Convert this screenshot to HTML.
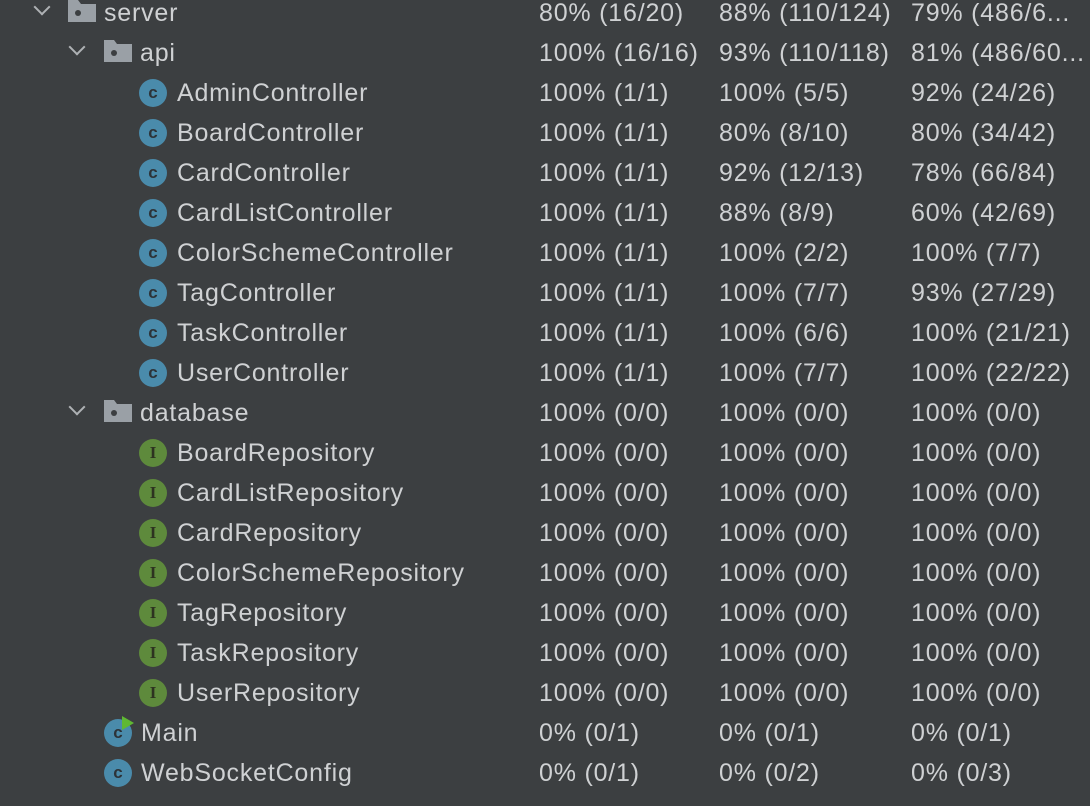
<!DOCTYPE html><html><head><style>
body{margin:0;width:1090px;height:806px;background:#3c3f41;overflow:hidden;font-family:"Liberation Sans",sans-serif;font-size:25px;letter-spacing:0.8px;color:#cfd1d3}
.r{position:absolute;left:0;height:40px;width:1090px;line-height:40px;white-space:nowrap}
.r span{position:absolute}
.c1{left:539px}.c2{left:719px}.c3{left:911px}
.ic{position:absolute;width:28px;height:28px;border-radius:50%;top:6px;text-align:center;line-height:28px;font-size:17px;font-weight:bold;letter-spacing:0}
.C{background:#4a8bab;color:#2d3338}
.I{background:#5e8a3c;color:#2d3320;font-family:"Liberation Serif",serif}
.f{position:absolute;top:8px;width:28px;height:22px}
.ch{position:absolute;top:12px;width:10px;height:10px;border-right:2px solid #aeb1b4;border-bottom:2px solid #aeb1b4;transform:rotate(45deg)}
</style></head><body>
<div class="r" style="top:-7px"><div class="ch" style="left:36px;top:8px"></div><svg class="f" style="left:68px;top:7px" viewBox="0 0 28 22"><path d="M0 0h10l3 4h15v18H0z" fill="#9aa0a6"/><circle cx="10" cy="13" r="3" fill="#3c3f41"/></svg><span style="left:104px">server</span><span class="c1">80% (16/20)</span><span class="c2">88% (110/124)</span><span class="c3">79% (486/6...</span></div>
<div class="r" style="top:33px"><div class="ch" style="left:71px;top:8px"></div><svg class="f" style="left:104px;top:7px" viewBox="0 0 28 22"><path d="M0 0h10l3 4h15v18H0z" fill="#9aa0a6"/><circle cx="10" cy="13" r="3" fill="#3c3f41"/></svg><span style="left:140px">api</span><span class="c1">100% (16/16)</span><span class="c2">93% (110/118)</span><span class="c3">81% (486/60...</span></div>
<div class="r" style="top:73px"><div class="ic C" style="left:139px">c</div><span style="left:177px">AdminController</span><span class="c1">100% (1/1)</span><span class="c2">100% (5/5)</span><span class="c3">92% (24/26)</span></div>
<div class="r" style="top:113px"><div class="ic C" style="left:139px">c</div><span style="left:177px">BoardController</span><span class="c1">100% (1/1)</span><span class="c2">80% (8/10)</span><span class="c3">80% (34/42)</span></div>
<div class="r" style="top:153px"><div class="ic C" style="left:139px">c</div><span style="left:177px">CardController</span><span class="c1">100% (1/1)</span><span class="c2">92% (12/13)</span><span class="c3">78% (66/84)</span></div>
<div class="r" style="top:193px"><div class="ic C" style="left:139px">c</div><span style="left:177px">CardListController</span><span class="c1">100% (1/1)</span><span class="c2">88% (8/9)</span><span class="c3">60% (42/69)</span></div>
<div class="r" style="top:233px"><div class="ic C" style="left:139px">c</div><span style="left:177px">ColorSchemeController</span><span class="c1">100% (1/1)</span><span class="c2">100% (2/2)</span><span class="c3">100% (7/7)</span></div>
<div class="r" style="top:273px"><div class="ic C" style="left:139px">c</div><span style="left:177px">TagController</span><span class="c1">100% (1/1)</span><span class="c2">100% (7/7)</span><span class="c3">93% (27/29)</span></div>
<div class="r" style="top:313px"><div class="ic C" style="left:139px">c</div><span style="left:177px">TaskController</span><span class="c1">100% (1/1)</span><span class="c2">100% (6/6)</span><span class="c3">100% (21/21)</span></div>
<div class="r" style="top:353px"><div class="ic C" style="left:139px">c</div><span style="left:177px">UserController</span><span class="c1">100% (1/1)</span><span class="c2">100% (7/7)</span><span class="c3">100% (22/22)</span></div>
<div class="r" style="top:393px"><div class="ch" style="left:71px;top:8px"></div><svg class="f" style="left:104px;top:7px" viewBox="0 0 28 22"><path d="M0 0h10l3 4h15v18H0z" fill="#9aa0a6"/><circle cx="10" cy="13" r="3" fill="#3c3f41"/></svg><span style="left:140px">database</span><span class="c1">100% (0/0)</span><span class="c2">100% (0/0)</span><span class="c3">100% (0/0)</span></div>
<div class="r" style="top:433px"><div class="ic I" style="left:139px">I</div><span style="left:177px">BoardRepository</span><span class="c1">100% (0/0)</span><span class="c2">100% (0/0)</span><span class="c3">100% (0/0)</span></div>
<div class="r" style="top:473px"><div class="ic I" style="left:139px">I</div><span style="left:177px">CardListRepository</span><span class="c1">100% (0/0)</span><span class="c2">100% (0/0)</span><span class="c3">100% (0/0)</span></div>
<div class="r" style="top:513px"><div class="ic I" style="left:139px">I</div><span style="left:177px">CardRepository</span><span class="c1">100% (0/0)</span><span class="c2">100% (0/0)</span><span class="c3">100% (0/0)</span></div>
<div class="r" style="top:553px"><div class="ic I" style="left:139px">I</div><span style="left:177px">ColorSchemeRepository</span><span class="c1">100% (0/0)</span><span class="c2">100% (0/0)</span><span class="c3">100% (0/0)</span></div>
<div class="r" style="top:593px"><div class="ic I" style="left:139px">I</div><span style="left:177px">TagRepository</span><span class="c1">100% (0/0)</span><span class="c2">100% (0/0)</span><span class="c3">100% (0/0)</span></div>
<div class="r" style="top:633px"><div class="ic I" style="left:139px">I</div><span style="left:177px">TaskRepository</span><span class="c1">100% (0/0)</span><span class="c2">100% (0/0)</span><span class="c3">100% (0/0)</span></div>
<div class="r" style="top:673px"><div class="ic I" style="left:139px">I</div><span style="left:177px">UserRepository</span><span class="c1">100% (0/0)</span><span class="c2">100% (0/0)</span><span class="c3">100% (0/0)</span></div>
<div class="r" style="top:713px"><div class="ic C" style="left:104px">c</div><svg style="position:absolute;left:122px;top:3px" width="12" height="14"><path d="M0 0L12 7L0 14z" fill="#5fb832"/></svg><span style="left:141px">Main</span><span class="c1">0% (0/1)</span><span class="c2">0% (0/1)</span><span class="c3">0% (0/1)</span></div>
<div class="r" style="top:753px"><div class="ic C" style="left:104px">c</div><span style="left:141px">WebSocketConfig</span><span class="c1">0% (0/1)</span><span class="c2">0% (0/2)</span><span class="c3">0% (0/3)</span></div>
</body></html>
